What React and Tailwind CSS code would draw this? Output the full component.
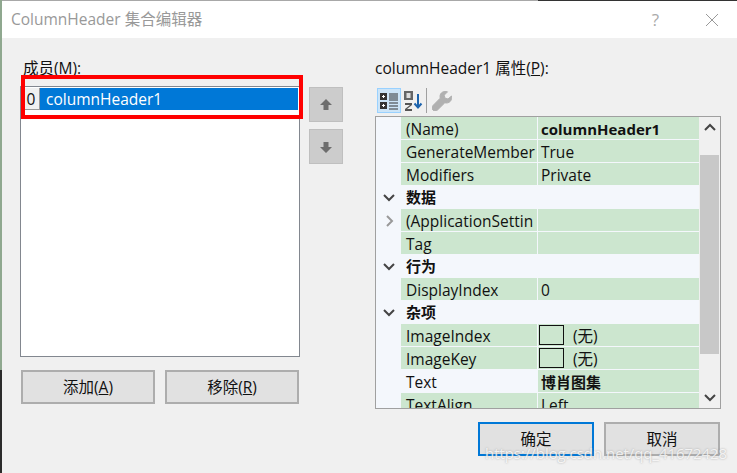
const FONT = "font-['Open_Sans','Noto_Sans_CJK_SC',sans-serif]";

const Chevron = ({ dir = "down", color = "#444" }) => {
  const d = { down: "M2 4l5 5 5-5", up: "M2 9l5-5 5 5", right: "M5 2l5 5-5 5" }[dir];
  return (
    <svg width="14" height="14" viewBox="0 0 14 14" fill="none" stroke={color} strokeWidth="2">
      <path d={d} />
    </svg>
  );
};

const Row = ({ name, value, bold, nameWhite, icon, swatch, children }) => (
  <div className="flex h-[23px] shrink-0">
    <div className="w-[25px] flex items-center justify-center">{icon}</div>
    <div className={`w-[136px] h-[22px] pl-[5px] overflow-hidden whitespace-nowrap leading-[24px] ${nameWhite ? "" : "bg-[#cce6cf]"}`}>{name}</div>
    <div className={`ml-px w-[161px] h-[22px] overflow-hidden whitespace-nowrap leading-[24px] bg-[#cce6cf] flex items-start ${swatch ? "pl-px" : "pl-[3px]"} ${bold ? "font-bold text-[15px]" : ""}`}>
      {children}
      {value}
    </div>
  </div>
);

const Cat = ({ name }) => (
  <div className="flex h-[23px] shrink-0 items-center">
    <div className="w-[25px] flex items-center justify-center"><Chevron /></div>
    <div className="pl-[5px] font-bold text-[15px]">{name}</div>
  </div>
);

const Swatch = () => <span className="w-[25px] h-[20px] mt-px border border-[#111] mr-[9px] shrink-0" />;

const Btn = ({ children, primary, className = "" }) => (
  <button className={`flex items-center justify-center bg-[#e1e1e1] h-[34px] pt-[2px] ${primary ? "border-2 border-[#0078d7]" : "border-2 border-[#adadad]"} ${className}`}>
    {children}
  </button>
);

const ArrowBtn = ({ d }) => (
  <button className="w-[34px] h-[35px] bg-[#cccccc] border border-[#bfbfbf] flex items-center justify-center">
    <svg width="14" height="14" viewBox="0 0 14 14" fill="#6d6d6d"><path d={d} /></svg>
  </button>
);

export default function App() {
  return (
    <div className={`${FONT} relative w-[737px] h-[473px] overflow-hidden bg-[#f0f0f0] text-[15.5px] text-[#111] flex`}>
      <div className="w-[2px] shrink-0 flex flex-col">
        <div className="h-[370px] bg-[#8fa88f]" />
        <div className="flex-1 bg-[#2b2b2b]" />
      </div>
      <div className="flex-1 flex flex-col min-w-0">
        <div className="h-px flex shrink-0">
          <div className="w-[536px] bg-[#a8a8a8]" />
          <div className="flex-1 bg-[#333]" />
        </div>
        <div className="h-[37px] bg-white shrink-0 flex items-center pl-[9px] pr-[18px] text-[#999] text-[15.5px]">
          <span className="flex-1">ColumnHeader 集合编辑器</span>
          <span className="text-[#aaa] text-[17px] mr-[46px]">?</span>
          <svg width="14" height="14" viewBox="0 0 14 14" stroke="#999" strokeWidth="1" fill="none"><path d="M1 1l12 12M13 1L1 13" /></svg>
        </div>
        <div className="flex-1 flex pl-[18px] pr-[15px] min-h-0">
          <div className="w-[280px] shrink-0 flex flex-col pt-[20px]">
            <div className="h-[28px] pl-[3px] leading-[20px]">成员(<u>M</u>):</div>
            <div className="w-[280px] h-[271px] bg-white border border-[#82878f] p-px">
              <div className="flex h-[22px]">
                <div className="w-[18px] pl-px bg-[#f0f0f0] border-r border-b border-[#999] text-center leading-[22px] text-[#111]">0</div>
                <div className="flex-1 bg-[#0078d7] text-white pl-[6px] leading-[23px]">columnHeader1</div>
              </div>
            </div>
            <div className="flex gap-[10px] mt-[13px] pl-px">
              <Btn className="w-[134px]"><span>添加(<u>A</u>)</span></Btn>
              <Btn className="w-[134px]"><span>移除(<u>R</u>)</span></Btn>
            </div>
          </div>
          <div className="w-[34px] ml-[9px] mt-[49px] flex flex-col gap-[7px] shrink-0">
            <ArrowBtn d="M7 1l6 6H9.500v5h-5V7H1z" />
            <ArrowBtn d="M7 13L1 7h3.500V2h5v5H13z" />
          </div>
          <div className="w-[346px] ml-[32px] flex flex-col pt-[20px] shrink-0">
            <div className="h-[30px] leading-[20px]">columnHeader1 属性(<u>P</u>):</div>
            <div className="h-[28px] flex items-start pl-[2px] gap-[2px]">
              <div className="w-[24px] h-[25px] bg-[#cce4f7] border border-[#99d1ff] flex items-center justify-center">
                <svg width="20" height="20" viewBox="0 0 20 20">
                  <rect x="1" y="2" width="7" height="7" fill="#333" /><rect x="1" y="11" width="7" height="7" fill="#333" />
                  <rect x="3" y="5" width="3" height="1" fill="#fff" /><rect x="3" y="14" width="3" height="1" fill="#fff" /><rect x="4" y="4" width="1" height="3" fill="#fff" /><rect x="4" y="13" width="1" height="3" fill="#fff" />
                  <path d="M10 3h9M10 5h9M10 7h9M10 9h9M10 12h9M10 15h9M10 18h9" stroke="#333" strokeWidth="1" />
                </svg>
              </div>
              <div className="w-[20px] h-[25px] flex items-center justify-center">
                <svg width="20" height="22" viewBox="0 0 20 22" fill="none">
                  <rect x="1" y="1" width="9" height="9" fill="#666" /><rect x="3.500" y="3" width="4" height="5" fill="#ddd" />
                  <path d="M2 13h7v2l-5 4h5v2H2v-2l5-4H2z" fill="#555" />
                  <path d="M15 4v13M11.500 13.500l3.500 4 3.500-4" stroke="#1c63ad" strokeWidth="2" />
                </svg>
              </div>
              <div className="w-px h-[25px] bg-[#a0a0a0] ml-px" />
              <div className="w-[22px] h-[25px] flex items-center justify-center ml-[2px]">
                <svg width="20" height="20" viewBox="0 0 20 20" fill="#b0b0b0" stroke="#b0b0b0" strokeWidth="1">
                  <path d="M19.500 5l-3.500 3-3-.8-.8-3L15.500.8C12-.5 8 1.500 8 5.500c0 .6.100 1.200.2 1.700L1 14.500c-1.300 1.300-1.300 3.200 0 4.500s3.200 1.300 4.500 0l7.300-7.200c.5.100 1 .2 1.500.2 4 0 6-3.500 5.200-7z" />
                </svg>
              </div>
            </div>
            <div className="w-[346px] h-[293px] border border-[#a0a0a0] bg-[#f4f7fc] flex overflow-hidden">
              <div className="w-[323px] flex flex-col overflow-hidden">
                <Row name="(Name)" value="columnHeader1" bold />
                <Row name="GenerateMember" value="True" />
                <Row name="Modifiers" value="Private" />
                <Cat name="数据" />
                <Row name="(ApplicationSettin" value="" icon={<Chevron dir="right" color="#999" />} />
                <Row name="Tag" value="" />
                <Cat name="行为" />
                <Row name="DisplayIndex" value="0" />
                <Cat name="杂项" />
                <Row name="ImageIndex" value="(无)" swatch><Swatch /></Row>
                <Row name="ImageKey" value="(无)" swatch><Swatch /></Row>
                <Row name="Text" value="博肖图集" bold nameWhite />
                <Row name="TextAlign" value="Left" />
              </div>
              <div className="w-[21px] bg-[#f0f0f0] flex flex-col items-center">
                <div className="h-[38px] w-full pt-[4px] flex justify-center shrink-0"><Chevron dir="up" /></div>
                <div className="h-[199px] w-[19px] bg-[#c8c8c8] shrink-0" />
                <div className="flex-1 flex items-end pb-[3px]"><Chevron /></div>
              </div>
            </div>
            <div className="flex justify-end gap-[10px] mt-[13px] pr-px">
              <Btn primary className="w-[116px]">确定</Btn>
              <Btn className="w-[116px]">取消</Btn>
            </div>
          </div>
        </div>
      </div>
      <div className="absolute left-[21px] top-[75px] w-[282px] h-[44px] border-[4px] border-[#ff0000]" />
      <div className="absolute left-[485px] top-[442px] text-[14.900px] text-white/80 whitespace-nowrap [text-shadow:0_0_2px_rgba(130,130,130,0.7)]">https://blog.csdn.net/qq_41672428</div>
    </div>
  );
}
